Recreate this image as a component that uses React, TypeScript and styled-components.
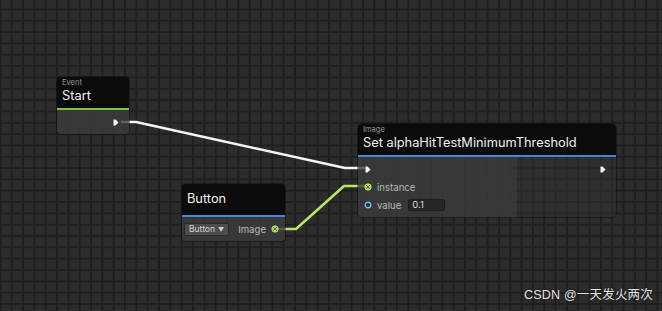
import React from 'react';
import styled, { createGlobalStyle } from 'styled-components';

const GlobalStyle = createGlobalStyle`
  html, body {
    margin: 0;
    padding: 0;
    background: #2b2b2b;
  }
  body {
    font-family: Inter, "Liberation Sans", "Noto Sans CJK SC", sans-serif;
  }
`;

const GRID = '11.333px';

const Canvas = styled.div`
  position: relative;
  width: 662px;
  height: 311px;
  overflow: hidden;
  background-color: #2c2c2c;
  background-image:
    linear-gradient(to right, #1f1f1f 0 2px, transparent 2px),
    linear-gradient(to bottom, #1f1f1f 0 2px, transparent 2px);
  background-size: ${GRID} ${GRID};
  background-position: -0.5px 8.5px;
`;

const Wires = styled.svg`
  position: absolute;
  inset: 0;
  pointer-events: none;
`;

const Node = styled.div<{ $x: number; $y: number; $w: number }>`
  position: absolute;
  left: ${(p) => p.$x}px;
  top: ${(p) => p.$y}px;
  width: ${(p) => p.$w}px;
  display: flex;
  flex-direction: column;
  border-radius: 4px;
  box-shadow: 0 0 0 1px rgba(0, 0, 0, 0.35);
`;

const Header = styled.div<{ $accent: string; $solo?: boolean }>`
  height: 33px;
  box-sizing: border-box;
  padding: ${(p) => (p.$solo ? '6px' : '2px')} 5px 0;
  background: #0b0b0b;
  border-radius: 4px 4px 0 0;
  border-bottom: 2px solid ${(p) => p.$accent};
  display: flex;
  flex-direction: column;
`;

const Category = styled.div`
  font-size: 7.5px;
  line-height: 8px;
  color: #9a9a9a;
`;

const Title = styled.div`
  font-size: 12.8px;
  line-height: 17px;
  color: #f2f2f2;
  white-space: nowrap;
`;

const Body = styled.div`
  display: flex;
  border-radius: 0 0 4px 4px;
  overflow: hidden;
`;

const Column = styled.div<{ $grow?: boolean; $clear?: boolean; $align?: string }>`
  flex: ${(p) => (p.$grow ? '1 1 auto' : '0 0 auto')};
  display: flex;
  flex-direction: column;
  align-items: ${(p) => p.$align || 'flex-start'};
  padding: 3px 6px;
  background: ${(p) => (p.$clear ? 'rgba(50, 50, 50, 0.45)' : 'rgba(60, 60, 60, 0.8)')};
`;

const Row = styled.div`
  height: 18px;
  display: flex;
  align-items: center;
  gap: 5px;
`;

const Slot = styled.span`
  width: 8px;
  display: flex;
  justify-content: center;
  align-items: center;
`;

const Label = styled.span`
  font-size: 9.6px;
  color: #b8b8b8;
`;

const ValueField = styled.div`
  width: 37px;
  height: 12px;
  box-sizing: border-box;
  margin-left: 2px;
  padding-left: 3px;
  background: #262626;
  border: 1px solid #1e1e1e;
  border-radius: 2px;
  font-size: 9.5px;
  line-height: 10px;
  color: #dcdcdc;
`;

const Dropdown = styled.div`
  height: 13px;
  box-sizing: border-box;
  padding: 0 4px;
  display: flex;
  align-items: center;
  gap: 3px;
  background: #4d4d4d;
  border: 1px solid #2a2a2a;
  border-radius: 2px;
  font-size: 8.5px;
  color: #d4d4d4;
`;

const Watermark = styled.div`
  position: absolute;
  right: 9px;
  bottom: 8px;
  font-family: "Liberation Sans", "Noto Sans CJK SC", sans-serif;
  font-size: 12.5px;
  letter-spacing: 0.2px;
  color: #e4e4e4;
  text-shadow: 0 0 2px rgba(0, 0, 0, 0.6);
`;

function FlowArrow() {
  return (
    <svg width="6" height="7" viewBox="0 0 6 7">
      <path d="M0.5 0.5 H2.5 L5.5 3.5 L2.5 6.5 H0.5 Z" fill="#f4f4f4" />
    </svg>
  );
}

function ObjectPort() {
  return (
    <svg width="8" height="8" viewBox="0 0 8 8">
      <circle cx="4" cy="4" r="3.2" fill="#a9d85a" />
      <path d="M2 2 L6 6 M6 2 L2 6" stroke="#5d7a2c" strokeWidth="1" />
      <circle cx="4" cy="4" r="3.2" fill="none" stroke="#c4ea7a" strokeWidth="0.8" />
    </svg>
  );
}

function FloatPort() {
  return (
    <svg width="8" height="8" viewBox="0 0 8 8">
      <circle cx="4" cy="4" r="2.8" fill="#2a2a2a" stroke="#5cc6d6" strokeWidth="1.4" />
    </svg>
  );
}

export default function App() {
  return (
    <>
      <GlobalStyle />
      <Canvas>
        <Wires width="662" height="311">
          <path
            d="M121 122 H136 L345 168 H365"
            fill="none"
            stroke="#f4f4f4"
            strokeWidth="2.5"
            strokeLinejoin="round"
          />
          <path
            d="M276 229 H296 L344 186 H366"
            fill="none"
            stroke="#bde468"
            strokeWidth="2.5"
            strokeLinejoin="round"
          />
        </Wires>

        <Node $x={57} $y={77} $w={72}>
          <Header $accent="#7cc246">
            <Category>Event</Category>
            <Title>Start</Title>
          </Header>
          <Body>
            <Column $grow $align="flex-end" style={{ paddingRight: 10 }}>
              <Row>
                <FlowArrow />
              </Row>
            </Column>
          </Body>
        </Node>

        <Node $x={182} $y={184} $w={103}>
          <Header $accent="#3f8ae0" $solo>
            <Title>Button</Title>
          </Header>
          <Body>
            <Column style={{ paddingLeft: 2, paddingRight: 3 }}>
              <Row>
                <Dropdown>
                  Button <span style={{ fontSize: 6 }}>▼</span>
                </Dropdown>
              </Row>
            </Column>
            <Column $grow $align="flex-end">
              <Row>
                <Label>Image</Label>
                <Slot>
                  <ObjectPort />
                </Slot>
              </Row>
            </Column>
          </Body>
        </Node>

        <Node $x={358} $y={124} $w={258}>
          <Header $accent="#3f8ae0">
            <Category>Image</Category>
            <Title>Set alphaHitTestMinimumThreshold</Title>
          </Header>
          <Body>
            <Column style={{ width: 159, boxSizing: 'border-box' }}>
              <Row>
                <Slot>
                  <FlowArrow />
                </Slot>
              </Row>
              <Row>
                <Slot>
                  <ObjectPort />
                </Slot>
                <Label>instance</Label>
              </Row>
              <Row>
                <Slot>
                  <FloatPort />
                </Slot>
                <Label>value</Label>
                <ValueField>0.1</ValueField>
              </Row>
            </Column>
            <Column $grow $clear $align="flex-end" style={{ paddingRight: 10 }}>
              <Row>
                <FlowArrow />
              </Row>
            </Column>
          </Body>
        </Node>

        <Watermark>CSDN @一天发火两次</Watermark>
      </Canvas>
    </>
  );
}
